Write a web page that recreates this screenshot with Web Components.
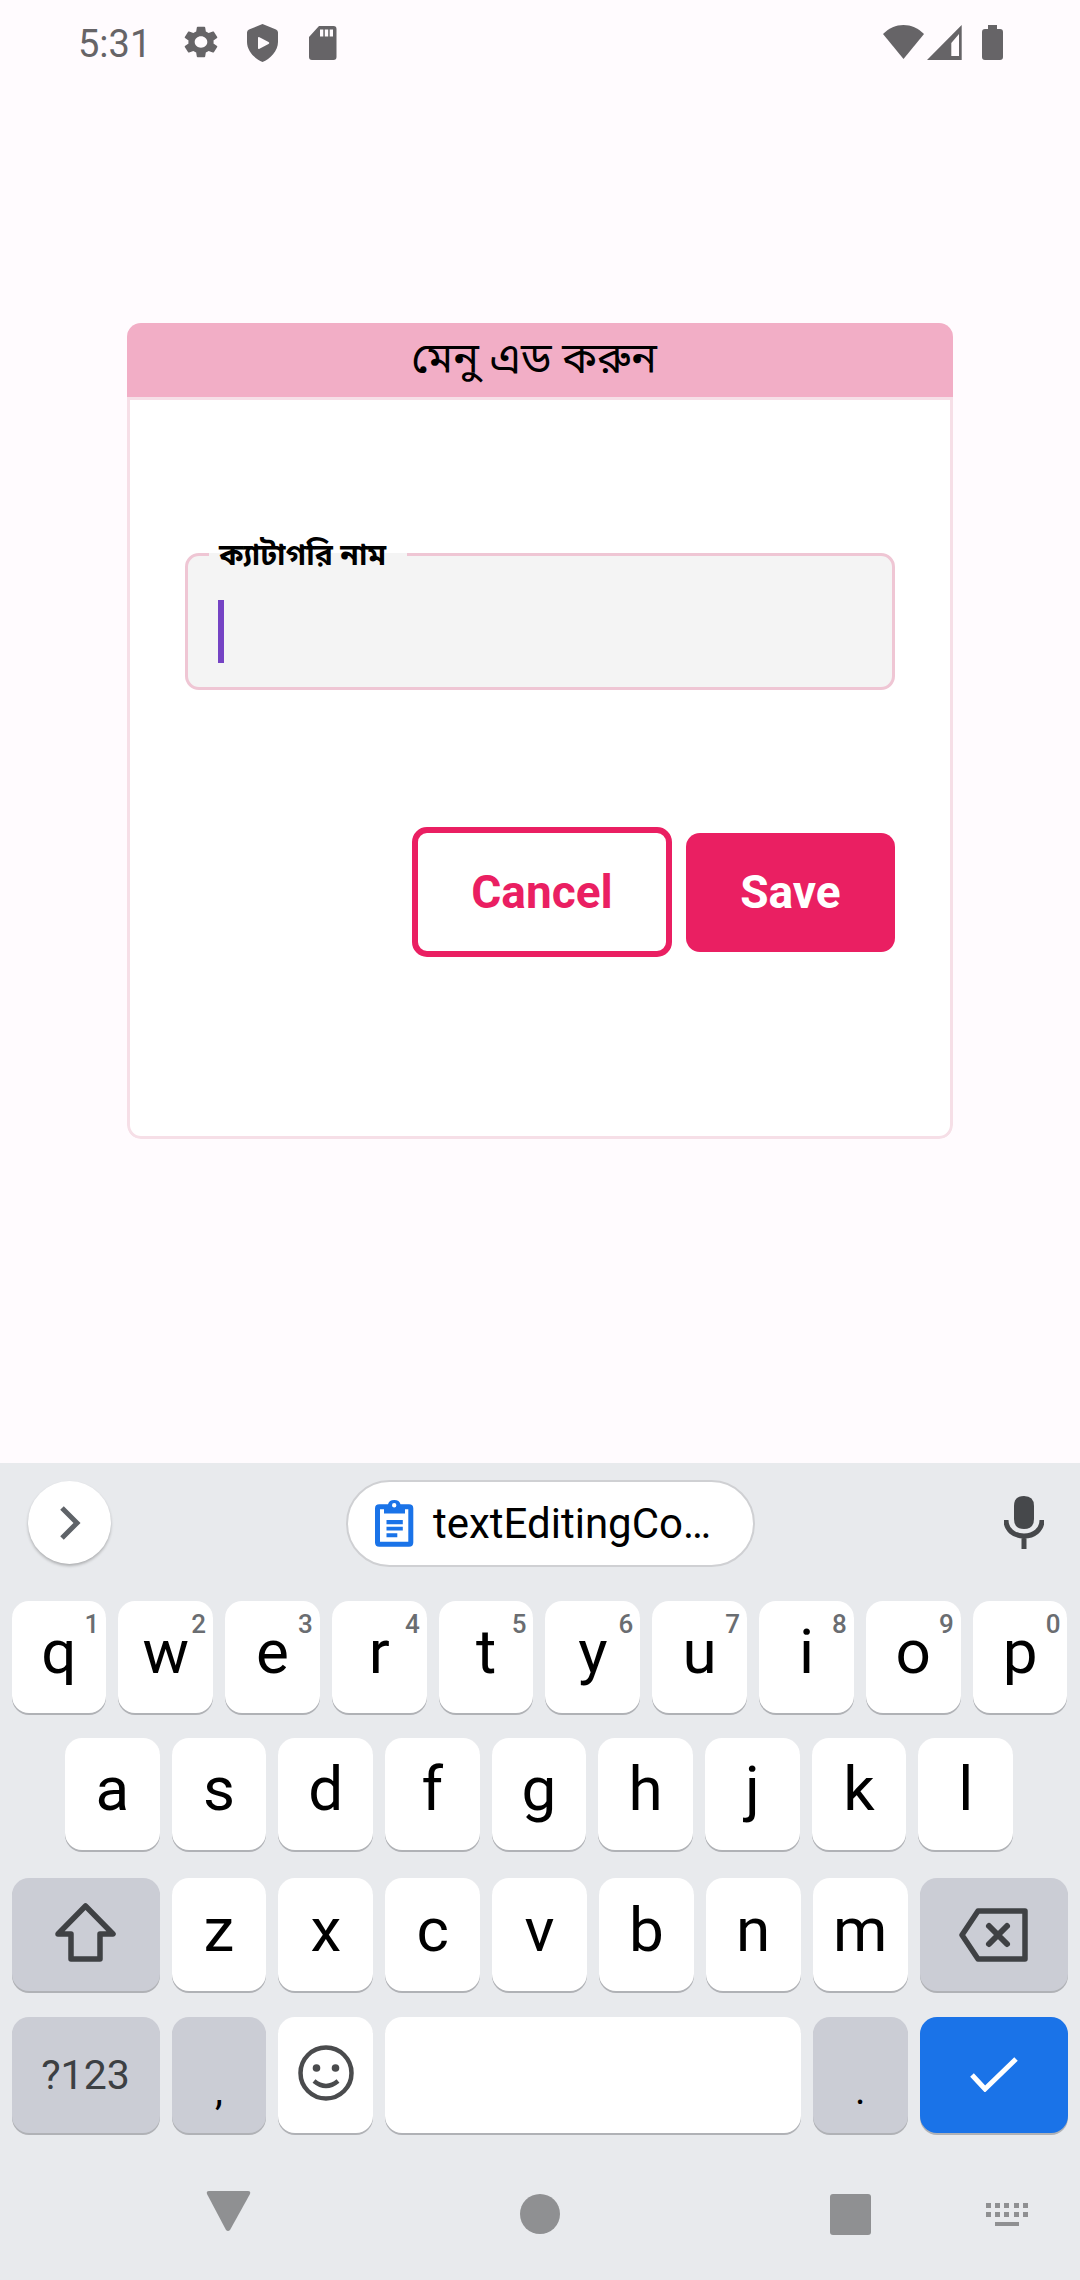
<!DOCTYPE html>
<html>
<head>
<meta charset="utf-8">
<style>
    html, body { margin: 0; padding: 0; background: #fffbfe; }
    body { width: 1080px; height: 2280px; overflow: hidden; font-family: Roboto, "Noto Sans", "Noto Sans Bengali", sans-serif; }
    .screen { display: flex; flex-direction: column; height: 2280px; }
</style>
</head>
<body>
<div class="screen">
    <status-bar></status-bar>
    <menu-dialog heading="মেনু এড করুন">
        <text-field label="ক্যাটাগরি নাম"></text-field>
        <outline-button slot="actions">Cancel</outline-button>
        <fill-button slot="actions">Save</fill-button>
    </menu-dialog>
    <ime-keyboard></ime-keyboard>
</div>

<script>
const BENGALI = 'Roboto, "Noto Sans", "Noto Sans Bengali", "Noto Sans CJK SC", sans-serif';

class StatusBar extends HTMLElement {
    constructor() {
        super();
        this.attachShadow({ mode: 'open' });
        this.shadowRoot.innerHTML = `
            <style>
                :host { display: flex; align-items: flex-start; height: 84px; color: #666467; flex: none; }
                .time { font: 400 38px/44px Roboto, sans-serif; margin: 22px 0 0 78px; width: 102px; }
                svg { display: block; fill: #666467; flex: none; }
                .spacer { flex: 1; }
            </style>
            <span class="time">5:31</span>
            <svg style="margin-top:23px" width="42" height="38" viewBox="0 0 24 24" preserveAspectRatio="none"><path d="M19.14 12.94c.04-.3.06-.61.06-.94 0-.32-.02-.64-.07-.94l2.03-1.58c.18-.14.23-.41.12-.61l-1.92-3.32c-.12-.22-.37-.29-.59-.22l-2.39.96c-.5-.38-1.03-.7-1.62-.94l-.36-2.54c-.04-.24-.24-.41-.48-.41h-3.84c-.24 0-.43.17-.47.41l-.36 2.54c-.59.24-1.13.57-1.62.94l-2.39-.96c-.22-.08-.47 0-.59.22L2.74 8.87c-.12.21-.08.47.12.61l2.03 1.58c-.05.3-.09.63-.09.94s.02.64.07.94l-2.03 1.58c-.18.14-.23.41-.12.61l1.92 3.32c.12.22.37.29.59.22l2.39-.96c.5.38 1.03.7 1.62.94l.36 2.54c.05.24.24.41.48.41h3.84c.24 0 .44-.17.47-.41l.36-2.54c.59-.24 1.13-.56 1.62-.94l2.39.96c.22.08.47 0 .59-.22l1.92-3.32c.12-.22.07-.47-.12-.61l-2.01-1.58zM12 15.6c-1.98 0-3.6-1.62-3.6-3.6s1.62-3.6 3.6-3.6 3.6 1.62 3.6 3.6-1.62 3.6-3.6 3.6z"/></svg>
            <svg style="margin:24px 0 0 25px" width="31" height="38" viewBox="0 0 31 38"><path fill-rule="evenodd" d="M15.5 0 L29 5.500 Q31 6.500 31 8.500 V18 C31 27 23 35 15.5 38 C8 35 0 27 0 18 V8.500 Q0 6.500 2 5.500 Z M11 14 V24 Q11 25.500 12.500 24.800 L21.500 20 Q23 19 21.500 18 L12.500 13.200 Q11 12.500 11 14 Z"/></svg>
            <svg style="margin:26px 0 0 31px" width="28" height="34" viewBox="0 0 28 34"><path fill-rule="evenodd" d="M10 0 H24.500 Q27.500 0 27.500 3 V31 Q27.500 34 24.500 34 H3 Q0 34 0 31 V11 Z M11 3.500 V10.500 H14.300 V3.500 Z M15.800 3.500 V10.500 H19.200 V3.500 Z M20.700 3.500 V10.500 H24 V3.500 Z"/></svg>
            <span class="spacer"></span>
            <svg style="margin-top:25px" width="41" height="34" viewBox="0 0 41 34"><path d="M20.500 0 C28 0 35 3 41 9 L20.500 34 L0 9 C6 3 13 0 20.500 0 Z"/></svg>
            <svg style="margin:25px 0 0 3px" width="35" height="35" viewBox="0 0 35 35"><path fill-rule="evenodd" d="M34.700 0 V35 H0 Z M32 9 L24.300 18 V31 H32 Z"/></svg>
            <svg style="margin:25px 77px 0 20px" width="21" height="35" viewBox="0 0 21 35"><path d="M6 0 H15 V4 H18 Q21 4 21 7 V32 Q21 35 18 35 H3 Q0 35 0 32 V7 Q0 4 3 4 H6 Z"/></svg>
        `;
    }
}

class MenuDialog extends HTMLElement {
    constructor() {
        super();
        this.attachShadow({ mode: 'open' });
        this.shadowRoot.innerHTML = `
            <style>
                :host { display: block; flex: none; width: 826px; height: 816px; margin: 239px 0 324px 127px; box-sizing: border-box; }
                .box { height: 100%; display: flex; flex-direction: column; border-radius: 14px; overflow: hidden; background: #fff; box-sizing: border-box; }
                .head {
                    height: 74px; flex: none; background: #f2aec6; color: #000; text-align: center;
                    font: 400 43px/70px ${BENGALI}; padding-right: 12px;
                }
                .body {
                    flex: 1; padding: 153px 55px 0; box-sizing: border-box;
                    border: 3px solid #f6dfe7; border-bottom-left-radius: 14px; border-bottom-right-radius: 14px;
                }
                .actions { display: flex; justify-content: flex-end; align-items: center; gap: 14px; margin-top: 137px; }
            </style>
            <div class="box">
                <div class="head"></div>
                <div class="body">
                    <slot></slot>
                    <div class="actions"><slot name="actions"></slot></div>
                </div>
            </div>
        `;
        this.shadowRoot.querySelector('.head').textContent = this.getAttribute('heading');
    }
}

class TextField extends HTMLElement {
    constructor() {
        super();
        this.attachShadow({ mode: 'open' });
        this.shadowRoot.innerHTML = `
            <style>
                :host { display: block; position: relative; height: 137px; box-sizing: border-box; background: #f4f4f4; border: 3px solid #efc6d4; border-radius: 14px; }
                .label {
                    position: absolute; left: 21px; top: -14px; height: 26px; padding: 0 21px 0 10px;
                    font: 700 30px/26px ${BENGALI}; color: #000; background: linear-gradient(#fff 0 11px, #f4f4f4 11px);
                    white-space: nowrap;
                }
                .cursor { position: absolute; left: 30px; top: 44px; width: 6px; height: 63px; background: #7543c4; }
            </style>
            <span class="label"></span>
            <span class="cursor"></span>
        `;
        this.shadowRoot.querySelector('.label').textContent = this.getAttribute('label');
    }
}

class OutlineButton extends HTMLElement {
    constructor() {
        super();
        this.attachShadow({ mode: 'open' });
        this.shadowRoot.innerHTML = `
            <style>
                :host {
                    display: flex; align-items: center; justify-content: center; width: 260px; height: 130px;
                    box-sizing: border-box; border: 6px solid #ea1f62; border-radius: 15px; color: #ea1f62;
                    font: 700 46px/1 Roboto, sans-serif;
                }
            </style>
            <slot></slot>
        `;
    }
}

class FillButton extends HTMLElement {
    constructor() {
        super();
        this.attachShadow({ mode: 'open' });
        this.shadowRoot.innerHTML = `
            <style>
                :host {
                    display: flex; align-items: center; justify-content: center; width: 209px; height: 119px;
                    border-radius: 14px; background: #ea1f62; color: #fff;
                    font: 700 46px/1 Roboto, sans-serif;
                }
            </style>
            <slot></slot>
        `;
    }
}

class KbKey extends HTMLElement {
    constructor() {
        super();
        this.attachShadow({ mode: 'open' });
        this.shadowRoot.innerHTML = `
            <style>
                :host {
                    display: flex; position: relative; align-items: center; justify-content: center; flex: 1 1 0; min-width: 0;
                    box-sizing: border-box;
                    background: #fff; color: #000; border-radius: 17px; box-shadow: 0 2px 0 #b0b2b6;
                    font: 400 62px/1 Roboto, sans-serif;
                }
                :host([letter]) { padding-bottom: 10px; }
                :host([kind="fn"]) { background: #cbcdd5; }
                :host([kind="go"]) { background: #1a73e8; }
                :host([wide]) { flex: none; width: 148px; }
                :host([space]) { flex: none; width: 416px; }
                .hint { position: absolute; top: 9px; right: 7px; font: 500 26px/28px Roboto, sans-serif; color: #6a6d71; }
            </style>
            <slot></slot>
        `;
        const hint = this.getAttribute('hint');
        if (hint) {
            const el = document.createElement('span');
            el.className = 'hint';
            el.textContent = hint;
            this.shadowRoot.appendChild(el);
        }
    }
}

class ImeKeyboard extends HTMLElement {
    constructor() {
        super();
        this.attachShadow({ mode: 'open' });
        const top = 'qwertyuiop'.split('').map((c, i) => `<kb-key letter hint="${(i + 1) % 10}">${c}</kb-key>`).join('');
        const mid = 'asdfghjkl'.split('').map(c => `<kb-key letter>${c}</kb-key>`).join('');
        const low = 'zxcvbnm'.split('').map(c => `<kb-key letter>${c}</kb-key>`).join('');
        this.shadowRoot.innerHTML = `
            <style>
                :host { display: block; flex: 1; background: #e8eaed; }
                .strip { height: 138px; position: relative; display: flex; align-items: flex-start; }
                .more {
                    width: 83px; height: 83px; border-radius: 50%; background: #fff; margin: 18px 0 0 28px; flex: none;
                    box-shadow: 0 2px 3px rgba(0,0,0,.25); display: flex; align-items: center; justify-content: center;
                }
                .clip {
                    width: 409px; height: 87px; box-sizing: border-box; margin: 17px 0 0 235px; flex: none;
                    border-radius: 44px; background: #fff; border: 2px solid #cfd0d3;
                    display: flex; align-items: center; padding-left: 27px; gap: 19px;
                    font: 400 42px/1 Roboto, sans-serif; color: #000; white-space: nowrap;
                }
                .mic { margin: 33px 0 0 249px; flex: none; }
                .row { display: flex; gap: 12px; padding: 0 12.5px 0 11.500px; height: 112px; }
                .r2 { padding: 0 67px 0 65px; margin-top: 25px; }
                .r3 { margin-top: 28px; height: 113px; }
                .r4 { margin-top: 26px; height: 116px; }
                .nav { position: relative; display: flex; height: 147px; }
                .nav svg { position: absolute; fill: #8f9092; }
                .label-fn { font-size: 41px; color: #3c4043; }
                .low { align-self: flex-end; padding-bottom: 22px; font-size: 40px; }
            </style>
            <div class="strip">
                <div class="more"><svg width="24" height="36" viewBox="0 0 24 36"><path d="M4 3 L19 18 L4 33" fill="none" stroke="#5f6368" stroke-width="5"/></svg></div>
                <div class="clip">
                    <svg width="39" height="47" viewBox="0 0 39 47"><path fill="#1a73e8" fill-rule="evenodd" d="M13 4.300 Q14 0 19.200 0 Q24.500 0 25.500 4.300 H34 Q38.300 4.300 38.300 8.500 V42.500 Q38.300 46.700 34 46.700 H4.300 Q0 46.700 0 42.500 V8.500 Q0 4.300 4.300 4.300 Z M19.200 3 A2.200 2.200 0 1 0 19.201 7.400 A2.200 2.200 0 1 0 19.200 3 Z M5 9.300 V41.700 H33.300 V9.300 H30 V13.500 H9 V9.300 Z M11.500 20 H27.800 V24.300 H11.500 Z M11.500 26.700 H27.800 V30.500 H11.500 Z M11.500 33.300 H22.300 V37.300 H11.500 Z"/></svg>
                    <span>textEditingCo…</span>
                </div>
                <svg class="mic" width="40" height="53" viewBox="0 0 40 53"><path fill="#46484b" d="M20 0 Q30 0 30 10 V23 Q30 33 20 33 Q10 33 10 23 V10 Q10 0 20 0 Z"/><path fill="none" stroke="#46484b" stroke-width="5" d="M2 24 C2 34 10 40 20 40 C30 40 38 34 38 24 M20 40 V53"/></svg>
            </div>
            <div class="row">${top}</div>
            <div class="row r2">${mid}</div>
            <div class="row r3">
                <kb-key kind="fn" wide>
                    <svg style="margin-bottom:4px" width="61" height="59" viewBox="0 0 61 59"><path fill="none" stroke="#3f4144" stroke-width="5.500" stroke-linejoin="round" d="M30.500 3 L58 31 H45 V56 H16 V31 H3 Z"/></svg>
                </kb-key>
                ${low}
                <kb-key kind="fn" wide>
                    <svg width="69" height="54" viewBox="0 0 69 54"><path fill="none" stroke="#3f4144" stroke-width="5.500" stroke-linejoin="round" d="M19 3 H66 V51 H19 L3 27 Z"/><path fill="none" stroke="#3f4144" stroke-width="6" stroke-linecap="round" d="M30 18 L48 36 M48 18 L30 36"/></svg>
                </kb-key>
            </div>
            <div class="row r4">
                <kb-key kind="fn" wide><span class="label-fn">?123</span></kb-key>
                <kb-key kind="fn"><span class="low">,</span></kb-key>
                <kb-key>
                    <svg style="margin-bottom:4px" width="56" height="56" viewBox="0 0 56 56"><circle cx="28" cy="28" r="25.500" fill="none" stroke="#4a4b4d" stroke-width="4.500"/><circle cx="18.500" cy="23" r="3.800" fill="#4a4b4d"/><circle cx="37.500" cy="23" r="3.800" fill="#4a4b4d"/><path d="M16 36 Q28 46 40 36" fill="none" stroke="#4a4b4d" stroke-width="4.500"/></svg>
                </kb-key>
                <kb-key space></kb-key>
                <kb-key kind="fn"><span class="low">.</span></kb-key>
                <kb-key kind="go" wide>
                    <svg style="margin-bottom:3px" width="48" height="36" viewBox="0 0 48 36"><path fill="none" stroke="#fff" stroke-width="5" d="M2 19 L15 33 L46 3"/></svg>
                </kb-key>
            </div>
            <div class="nav">
                <svg style="left:206px;top:58px" width="45" height="41" viewBox="0 0 45 41"><path d="M3 0 H42 Q45 0 44 3 L24 39 Q22 41 20 39 L1 3 Q0 0 3 0 Z"/></svg>
                <svg style="left:520px;top:61px" width="40" height="40" viewBox="0 0 40 40"><circle cx="20" cy="20" r="20"/></svg>
                <svg style="left:830px;top:61px" width="41" height="41" viewBox="0 0 41 41"><rect width="41" height="41" rx="3"/></svg>
                <svg style="left:986px;top:70px" width="42" height="23" viewBox="0 0 42 23"><g><rect x="0" y="0" width="5" height="5"/><rect x="9" y="0" width="5" height="5"/><rect x="18" y="0" width="5" height="5"/><rect x="28" y="0" width="5" height="5"/><rect x="37" y="0" width="5" height="5"/><rect x="0" y="9" width="5" height="5"/><rect x="9" y="9" width="5" height="5"/><rect x="18" y="9" width="5" height="5"/><rect x="28" y="9" width="5" height="5"/><rect x="37" y="9" width="5" height="5"/><rect x="9" y="19" width="24" height="4"/></g></svg>
            </div>
        `;
    }
}

customElements.define('status-bar', StatusBar);
customElements.define('menu-dialog', MenuDialog);
customElements.define('text-field', TextField);
customElements.define('outline-button', OutlineButton);
customElements.define('fill-button', FillButton);
customElements.define('kb-key', KbKey);
customElements.define('ime-keyboard', ImeKeyboard);
</script>
</body>
</html>
